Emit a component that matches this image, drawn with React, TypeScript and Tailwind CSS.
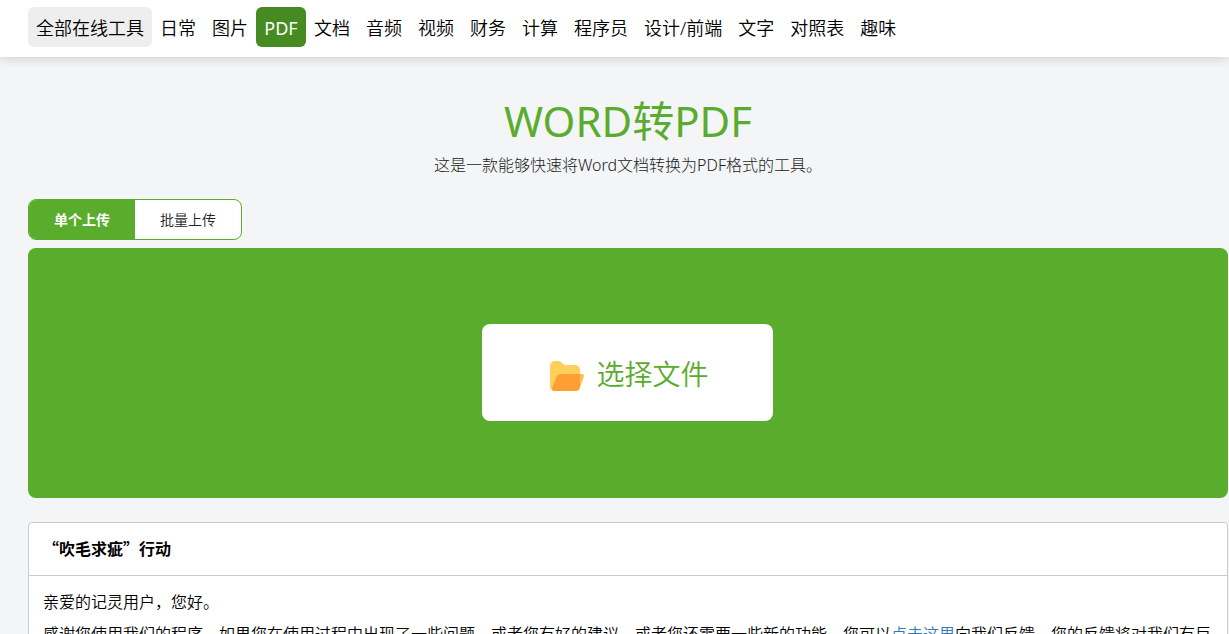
import { useState } from "react";

const categories = [
  "日常",
  "图片",
  "PDF",
  "文档",
  "音频",
  "视频",
  "财务",
  "计算",
  "程序员",
  "设计/前端",
  "文字",
  "对照表",
  "趣味",
];

function NavBar() {
  return (
    <header className="relative bg-white pt-[7px] pb-[10px] pl-7 shadow-[0_2px_10px_rgba(0,0,0,0.15)]">
      <nav className="flex flex-wrap text-lg font-[350] text-black">
        <a href="#all" className="flex h-10 items-center rounded-md bg-[#eeeeee] px-2 pt-px">
          全部在线工具
        </a>
        {categories.map((name) => (
          <a
            key={name}
            href={"#" + name}
            aria-current={name === "PDF" ? "page" : undefined}
            className={
              name === "PDF"
                ? "flex h-10 min-w-[50px] items-center justify-center rounded-md bg-[#458b22] px-2 pt-px font-normal text-white"
                : "flex h-10 items-center px-2 pt-px"
            }
          >
            {name}
          </a>
        ))}
      </nav>
    </header>
  );
}

function FolderIcon() {
  return (
    <svg viewBox="0 0 34 30" className="h-[30px] w-[34px]" aria-hidden="true">
      <path
        d="M0 5.500C0 2.300 2.200 0 5 0h3c1.700 0 2.600.5 3.700 1.600l1.500 1.500c.6.600 1.200.9 2.200.9H25c3 0 5 2.300 5 5.500V25c0 3-2 5-5 5H5c-3 0-5-2-5-5z"
        fill="#ffcf5c"
      />
      <path
        d="M6.700 15.700C7.500 13.800 9 13 10.900 13H31.600c1.900 0 2.800 1.100 2.200 2.800l-4 11.200C29 29.100 27.500 30 25.500 30H5c-2.300 0-3.600-1.500-2.700-3.800z"
        fill="#ffbd5c"
      />
      <path
        d="M6.700 15.700C7.500 13.800 9 13 10.900 13H30v13.500l-.2.500C29 29.100 27.500 30 25.500 30H5c-2.300 0-3.600-1.500-2.700-3.800z"
        fill="#ff9f33"
      />
    </svg>
  );
}

export default function App() {
  const [batch, setBatch] = useState(false);

  return (
    <div
      lang="zh-CN"
      className="min-h-screen bg-[#f3f5f7] font-['Noto_Sans','Noto_Sans_CJK_SC',sans-serif] text-black"
    >
      <NavBar />
      <main className="mr-px ml-7">
        <h1 className="pt-[34px] text-center text-[42px] leading-[60px] text-[#5aac2d]">WORD转PDF</h1>
        <p className="pt-0.5 text-center text-base leading-6 font-light text-[#222222]">
          这是一款能够快速将Word文档转换为PDF格式的工具。
        </p>

        <div className="mt-[22px] flex h-[41px] w-[214px] overflow-hidden rounded-lg border border-[#5aac2d] bg-white text-sm">
          <button
            type="button"
            aria-pressed={!batch}
            onClick={() => setBatch(false)}
            className={
              batch ? "flex-1 font-[350] text-[#222222]" : "flex-1 bg-[#5aac2d] font-bold text-white"
            }
          >
            单个上传
          </button>
          <button
            type="button"
            aria-pressed={batch}
            onClick={() => setBatch(true)}
            className={
              batch ? "flex-1 bg-[#5aac2d] font-bold text-white" : "flex-1 font-[350] text-[#222222]"
            }
          >
            批量上传
          </button>
        </div>

        <section className="mt-2 flex h-[250px] items-center justify-center rounded-lg bg-[#5aac2d] pr-px pb-px">
          <button
            type="button"
            className="flex h-[97px] w-[291px] items-center justify-center gap-3 rounded-lg bg-white pt-1.5 pl-1 text-[28px] font-[350] text-[#5aac2d]"
          >
            <FolderIcon />
            <span className="pb-1">选择文件</span>
          </button>
        </section>

        <section className="mt-6 rounded-[4px] border border-[#cccccc] bg-white">
          <h2 className="border-b border-[#cccccc] px-[14px] pt-[13px] pb-[15px] font-['Noto_Sans_CJK_SC',sans-serif] text-base leading-6 font-bold">
            “吹毛求疵”行动
          </h2>
          <div className="px-[14px] py-[10px] text-base leading-8 font-[350]">
            <p>亲爱的记灵用户，您好。</p>
            <p>
              感谢您使用我们的程序，如果您在使用过程中出现了一些问题，或者您有好的建议，或者您还需要一些新的功能，您可以
              <a href="#feedback" className="text-[#337ab7]">
                点击这里
              </a>
              向我们反馈，您的反馈将对我们有巨大的帮助。
            </p>
          </div>
        </section>
      </main>
    </div>
  );
}
